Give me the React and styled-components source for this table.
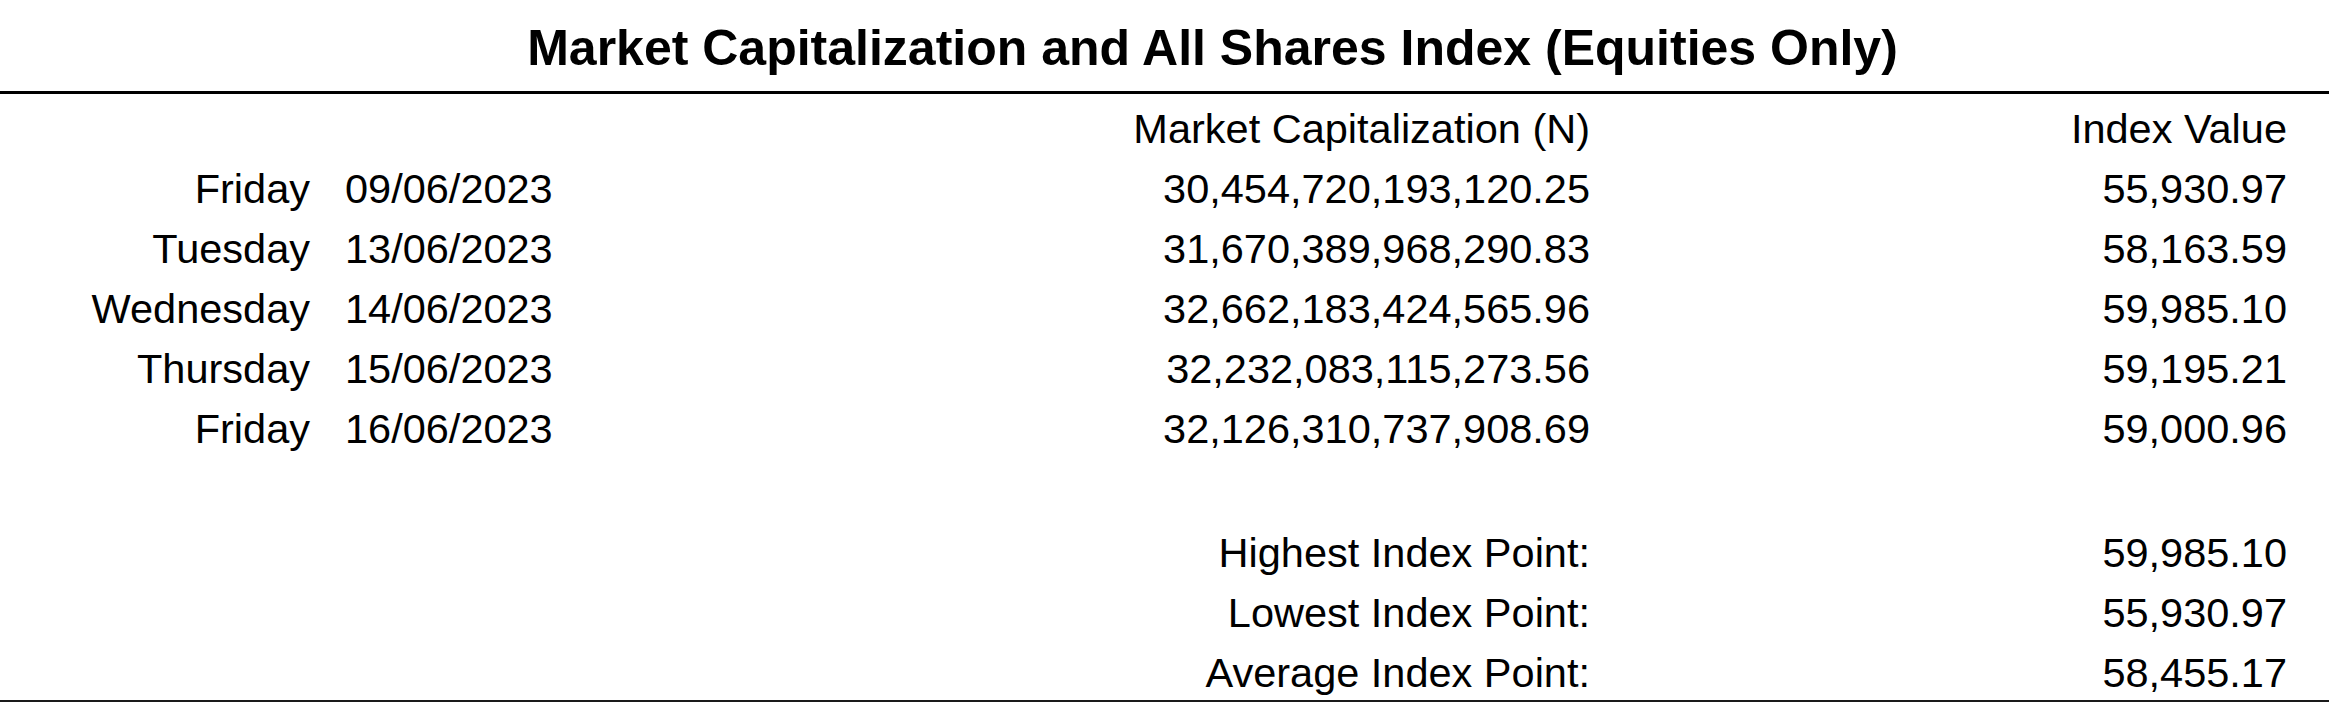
import React from 'react';
import styled, { createGlobalStyle } from 'styled-components';

const GlobalStyle = createGlobalStyle`
  html, body {
    margin: 0;
    padding: 0;
    background: #fff;
  }
  body {
    font-family: "Liberation Sans", Arial, sans-serif;
    color: #000;
  }
`;

const rows = [
  { day: 'Friday', date: '09/06/2023', cap: '30,454,720,193,120.25', index: '55,930.97' },
  { day: 'Tuesday', date: '13/06/2023', cap: '31,670,389,968,290.83', index: '58,163.59' },
  { day: 'Wednesday', date: '14/06/2023', cap: '32,662,183,424,565.96', index: '59,985.10' },
  { day: 'Thursday', date: '15/06/2023', cap: '32,232,083,115,273.56', index: '59,195.21' },
  { day: 'Friday', date: '16/06/2023', cap: '32,126,310,737,908.69', index: '59,000.96' },
];

const summary = [
  { label: 'Highest Index Point:', value: '59,985.10' },
  { label: 'Lowest Index Point:', value: '55,930.97' },
  { label: 'Average Index Point:', value: '58,455.17' },
];

const Page = styled.div`
  width: 2329px;
  height: 702px;
  overflow: hidden;
  display: flex;
  flex-direction: column;
`;

const Title = styled.h1`
  margin: 0;
  padding: 23px 0 18px 96px;
  font-size: 50px;
  line-height: 50px;
  font-weight: 700;
  text-align: center;
  white-space: nowrap;
  border-bottom: 3px solid #000;
`;

const Sheet = styled.div`
  display: flex;
  flex-direction: column;
  padding-right: 42px;
  border-bottom: 2px solid #1a1a1a;
`;

const Grid = styled.div`
  display: grid;
  grid-template-columns: 310px 780px 500px 697px;
  row-gap: 5px;
  margin-top: ${(p) => p.$top}px;
  font-size: 41.5px;
  line-height: 55px;
  white-space: nowrap;
`;

const Cell = styled.div`
  text-align: ${(p) => p.$align || 'right'};
  padding-left: ${(p) => p.$indent || 0}px;
  grid-column: ${(p) => p.$span || 'auto'};
`;

export default function App() {
  return (
    <Page>
      <GlobalStyle />
      <Title>Market Capitalization and All Shares Index (Equities Only)</Title>
      <Sheet>
        <Grid $top={7}>
          <Cell $span="1 / 4">Market Capitalization (N)</Cell>
          <Cell>Index Value</Cell>
          {rows.map((r, i) => (
            <React.Fragment key={i}>
              <Cell>{r.day}</Cell>
              <Cell $align="left" $indent={35}>{r.date}</Cell>
              <Cell>{r.cap}</Cell>
              <Cell>{r.index}</Cell>
            </React.Fragment>
          ))}
        </Grid>
        <Grid $top={69}>
          {summary.map((s, i) => (
            <React.Fragment key={i}>
              <Cell $span="1 / 4">{s.label}</Cell>
              <Cell>{s.value}</Cell>
            </React.Fragment>
          ))}
        </Grid>
      </Sheet>
    </Page>
  );
}
